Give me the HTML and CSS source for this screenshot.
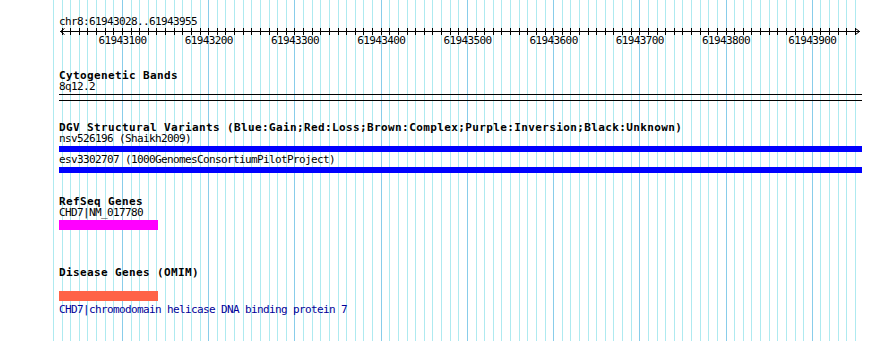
FILE: index.html
```html
<!DOCTYPE html>
<html lang="en">
<head>
    <meta charset="UTF-8">
    <title>chr8:61943028..61943955</title>
    <link rel="stylesheet" href="styles.css">
</head>
<body>

<div id="browser">
    <!-- grid drawn behind every track -->
    <svg id="grid" width="890" height="341"></svg>

    <div class="position">chr8:61943028..61943955</div>

    <!-- ruler -->
    <svg id="ruler" width="890" height="20">
        <line class="ruler-line" x1="60" y1="3.5" x2="860" y2="3.5"></line>
        <polyline class="ruler-line" points="64.5,0.5 60.5,3.5 64.5,6.5"></polyline>
        <polyline class="ruler-line" points="855.5,0.5 859.5,3.5 855.5,6.5"></polyline>
    </svg>

    <div class="track cytoband">
        <div class="track-title">Cytogenetic Bands</div>
        <div class="feature-label">8q12.2</div>
        <div class="band"></div>
    </div>

    <div class="track dgv">
        <div class="track-title">DGV Structural Variants (Blue:Gain;Red:Loss;Brown:Complex;Purple:Inversion;Black:Unknown)</div>
        <div class="feature-label">nsv526196 (Shaikh2009)</div>
        <div class="bar gain"></div>
        <div class="feature-label next">esv3302707 (1000GenomesConsortiumPilotProject)</div>
        <div class="bar gain tail"></div>
    </div>

    <div class="track refseq">
        <div class="track-title">RefSeq Genes</div>
        <div class="feature-label">CHD7|NM_017780</div>
        <div class="bar gene"></div>
    </div>

    <div class="track omim">
        <div class="track-title">Disease Genes (OMIM)</div>
        <div class="bar disease"></div>
        <div class="feature-label link">CHD7|chromodomain helicase DNA binding protein 7</div>
    </div>
</div>

<script>
    // Vue: 61943028..61943955, grille tous les 10 pb
    const SVG_NS = "http://www.w3.org/2000/svg";
    const firstPos = 61943020;
    const lastPos = 61943950;
    const scale = 0.8623; // px par base
    const grid = document.getElementById("grid");
    const ruler = document.getElementById("ruler");

    function xAt(pos) {
        return 53.5 + (pos - firstPos) * scale;
    }

    function addLine(parent, cls, x, y1, y2) {
        const line = document.createElementNS(SVG_NS, "line");
        line.setAttribute("class", cls);
        line.setAttribute("x1", x);
        line.setAttribute("x2", x);
        line.setAttribute("y1", y1);
        line.setAttribute("y2", y2);
        parent.appendChild(line);
    }

    for (let pos = firstPos; pos <= lastPos; pos += 10) {
        const x = Math.floor(xAt(pos)) + 0.5;
        const major = pos % 100 === 0;
        addLine(grid, major ? "grid-line major" : "grid-line", x, 0, 341);

        if (pos > 61943028) {
            addLine(ruler, "ruler-line", x, 0, 7);
        }

        if (major) {
            const label = document.createElementNS(SVG_NS, "text");
            label.setAttribute("class", "tick-label");
            label.setAttribute("x", xAt(pos));
            label.setAttribute("y", 16);
            label.textContent = pos;
            ruler.appendChild(label);
        }
    }
</script>

</body>
</html>
```

FILE: styles.css
```css
body {
    margin: 0;
    background-color: #fff;
}

#browser {
    position: relative;
    z-index: 0;
    width: 890px;
    height: 341px;
    padding-top: 16px;
    box-sizing: border-box;
    overflow: hidden;
    font-family: "DejaVu Sans Mono", monospace;
    font-size: 11px;
    line-height: 11px;
    letter-spacing: -0.62px;
    color: #000;
}

/* Grille derrière les pistes */
#grid {
    position: absolute;
    top: 0;
    left: 0;
    z-index: -1;
}

.grid-line {
    stroke: #aeeaf0;
    stroke-width: 1;
}

.grid-line.major {
    stroke: #88cdea;
}

.position {
    height: 12px;
    padding-left: 59px;
}

#ruler {
    display: block;
}

.ruler-line {
    stroke: #000;
    stroke-width: 1;
    fill: none;
}

.tick-label {
    text-anchor: middle;
    font-family: "DejaVu Sans Mono", monospace;
    font-size: 11px;
    letter-spacing: -0.62px;
    fill: #000;
}

/* Pistes */
.track {
    padding-left: 59px;
}

.track-title {
    height: 12px;
    font-weight: bold;
    letter-spacing: 0.38px;
    white-space: nowrap;
}

/* Le libellé passe au-dessus de la barre (le _ dépasse) */
.feature-label {
    position: relative;
    height: 12px;
    line-height: 9px;
    white-space: nowrap;
}

.cytoband {
    margin-top: 22px;
}

.band {
    width: 803px;
    height: 5px;
    border-top: 1px solid #000;
    border-bottom: 1px solid #000;
}

.dgv {
    margin-top: 21px;
}

.bar {
    height: 10px;
}

.bar.gain {
    width: 803px;
    height: 6px;
    background-color: #0000ff;
}

.feature-label.next {
    margin-top: 3px;
}

.refseq {
    margin-top: 23px;
}

.bar.gene {
    width: 99px;
    background-color: #ff00ff;
}

.omim {
    margin-top: 37px;
}

.bar.disease {
    width: 99px;
    margin-top: 12px;
    background-color: #ff6347;
}

.feature-label.link {
    margin-top: 4px;
    color: #000099;
}
```
